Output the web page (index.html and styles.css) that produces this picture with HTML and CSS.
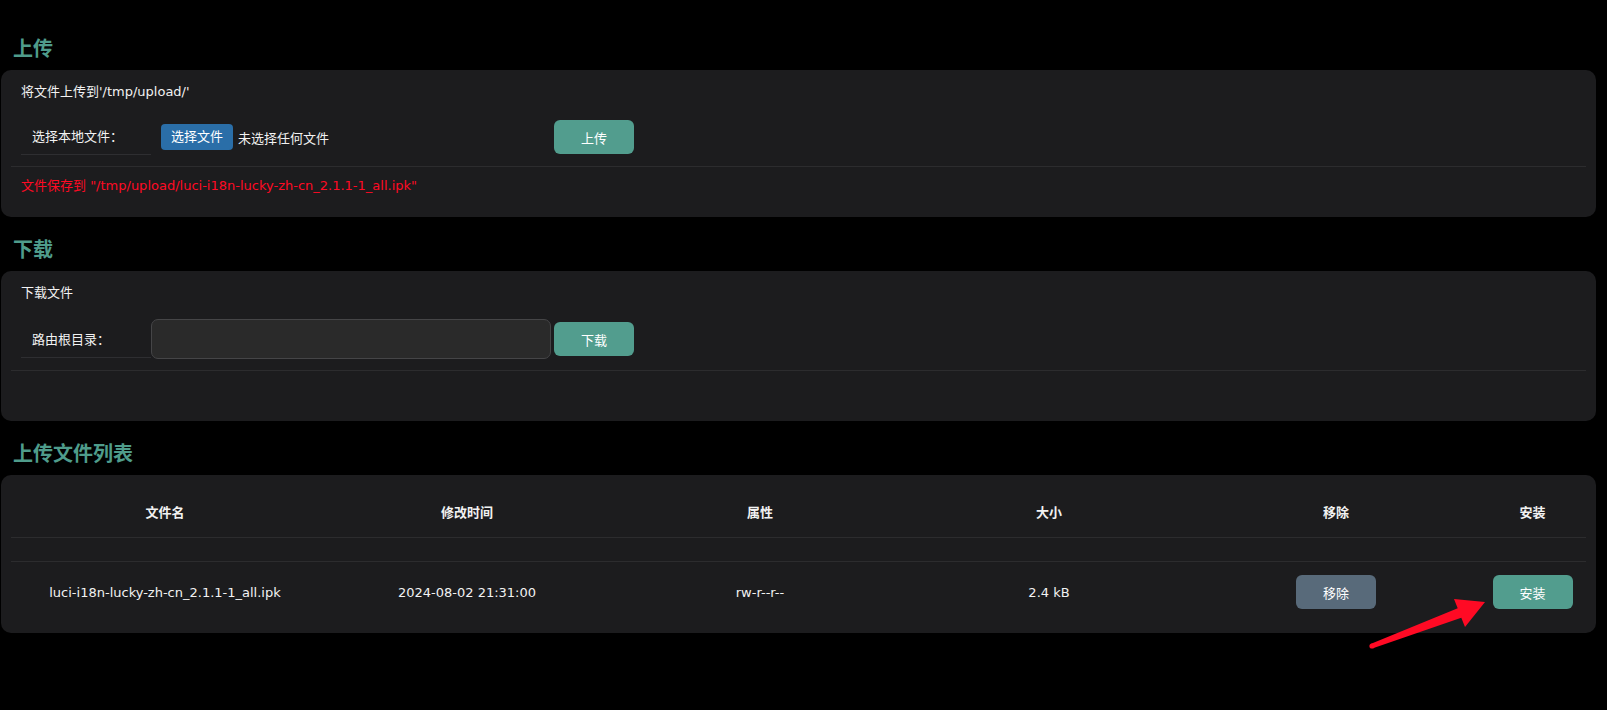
FILE: index.html
```html
<!DOCTYPE html>
<html lang="zh-CN">
<head>
<meta charset="utf-8">
<title>文件传输</title>
<link rel="stylesheet" href="styles.css">
</head>
<body>
<div class="page">
  <h2 class="section-title">上传</h2>
  <div class="card">
    <div class="card-title">将文件上传到'/tmp/upload/'</div>
    <div class="field-row">
      <div class="field-label">选择本地文件：</div>
      <div class="field-value">
        <span class="btn-file">选择文件</span>
        <span class="file-none">未选择任何文件</span>
      </div>
      <button class="btn btn-teal">上传</button>
    </div>
    <div class="message error">文件保存到 "/tmp/upload/luci-i18n-lucky-zh-cn_2.1.1-1_all.ipk"</div>
  </div>

  <h2 class="section-title">下载</h2>
  <div class="card">
    <div class="card-title">下载文件</div>
    <div class="field-row field-row-input">
      <div class="field-label">路由根目录：</div>
      <input class="text-input" type="text">
      <button class="btn btn-teal">下载</button>
    </div>
    <div class="message"></div>
  </div>

  <h2 class="section-title">上传文件列表</h2>
  <div class="card">
    <div class="table">
      <div class="trow thead">
        <div class="cell">文件名</div>
        <div class="cell">修改时间</div>
        <div class="cell">属性</div>
        <div class="cell">大小</div>
        <div class="cell">移除</div>
        <div class="cell">安装</div>
      </div>
      <div class="trow tspacer"></div>
      <div class="trow tbody">
        <div class="cell">luci-i18n-lucky-zh-cn_2.1.1-1_all.ipk</div>
        <div class="cell">2024-08-02 21:31:00</div>
        <div class="cell">rw-r--r--</div>
        <div class="cell">2.4 kB</div>
        <div class="cell"><button class="btn btn-gray">移除</button></div>
        <div class="cell"><button class="btn btn-teal">安装</button></div>
      </div>
    </div>
  </div>

  <svg class="annotation" width="1607" height="710" viewBox="0 0 1607 710">
    <polygon fill="#ff0a24" points="1371.1,643.7 1457.7,608.3 1454,599 1485,602 1465,627 1461.3,617.7 1372.9,648.3"/>
    <circle fill="#ff0a24" cx="1372" cy="646" r="2.6"/>
  </svg>
</div>
</body>
</html>
```

FILE: styles.css
```css
html, body {
  margin: 0;
  background: #000;
}

body {
  color: #f2f2f2;
  font-family: "DejaVu Sans", "Noto Sans CJK SC", sans-serif;
  font-size: 13px;
}

.page {
  position: relative;
  width: 1595px;
  padding: 16px 0 0 1px;
  height: 694px;
}

.section-title {
  margin: 18px 0 8px 12px;
  height: 28px;
  font-size: 20px;
  line-height: 28px;
  font-weight: bold;
  color: #4f9c8b;
  font-family: "Noto Sans CJK SC", sans-serif;
}

.card {
  background: #1c1c1e;
  border-radius: 10px;
  padding: 10px;
}

.card-title {
  padding-left: 10px;
  height: 24px;
  line-height: 24px;
}

.field-row {
  display: flex;
  align-items: center;
  height: 36px;
  padding: 15px 0 11px 10px;
  border-bottom: 1px solid #2c2c2e;
}

.field-row-input {
  height: 40px;
  padding-top: 14px;
  padding-bottom: 11px;
}

.field-label {
  box-sizing: border-box;
  width: 130px;
  height: 36px;
  padding: 0 0 3px 11px;
  display: flex;
  align-items: center;
  border-bottom: 1px solid #2e2e31;
}

.field-row-input .field-label {
  align-self: flex-end;
  margin-bottom: 1px;
}

.field-value {
  box-sizing: border-box;
  width: 400px;
  padding-left: 10px;
  display: flex;
  align-items: center;
  gap: 5px;
}

.btn-file {
  display: inline-block;
  height: 26px;
  line-height: 26px;
  padding: 0 10px;
  border-radius: 4px;
  background: #2a6ea8;
  color: #fff;
}

.text-input {
  box-sizing: border-box;
  width: 400px;
  height: 40px;
  margin: 0;
  background: #2a2a2a;
  border: 1px solid #454547;
  border-radius: 7px;
  outline: none;
}

.btn {
  width: 80px;
  height: 34px;
  margin: 0 0 0 3px;
  border: none;
  border-radius: 6px;
  color: #fff;
  font-family: "Noto Sans CJK SC", sans-serif;
  font-size: 13px;
  padding: 0;
}

.btn-teal {
  background: #529d8e;
}

.btn-gray {
  background: #586a7a;
  margin: 0;
}

.tbody .btn-teal {
  margin: 0;
}

.message {
  padding: 9px 10px 11px;
  height: 20px;
  line-height: 20px;
}

.error {
  color: #ff0a24;
}

.table {
  display: flex;
  flex-direction: column;
}

.trow {
  display: grid;
  grid-template-columns: 308px 296px 290px 288px 286px 1fr;
  border-bottom: 1px solid #2c2c2e;
}

.trow:last-child {
  border-bottom: none;
}

.cell {
  display: flex;
  justify-content: center;
  align-items: center;
}

.thead .cell {
  padding: 16px 0 14px;
  height: 22px;
  line-height: 22px;
  font-weight: bold;
  font-family: "Noto Sans CJK SC", sans-serif;
}

.tspacer {
  height: 23px;
}

.tbody .cell {
  height: 34px;
  padding: 13px 0 14px;
}

.annotation {
  position: absolute;
  left: 0;
  top: 0;
  pointer-events: none;
}
```
